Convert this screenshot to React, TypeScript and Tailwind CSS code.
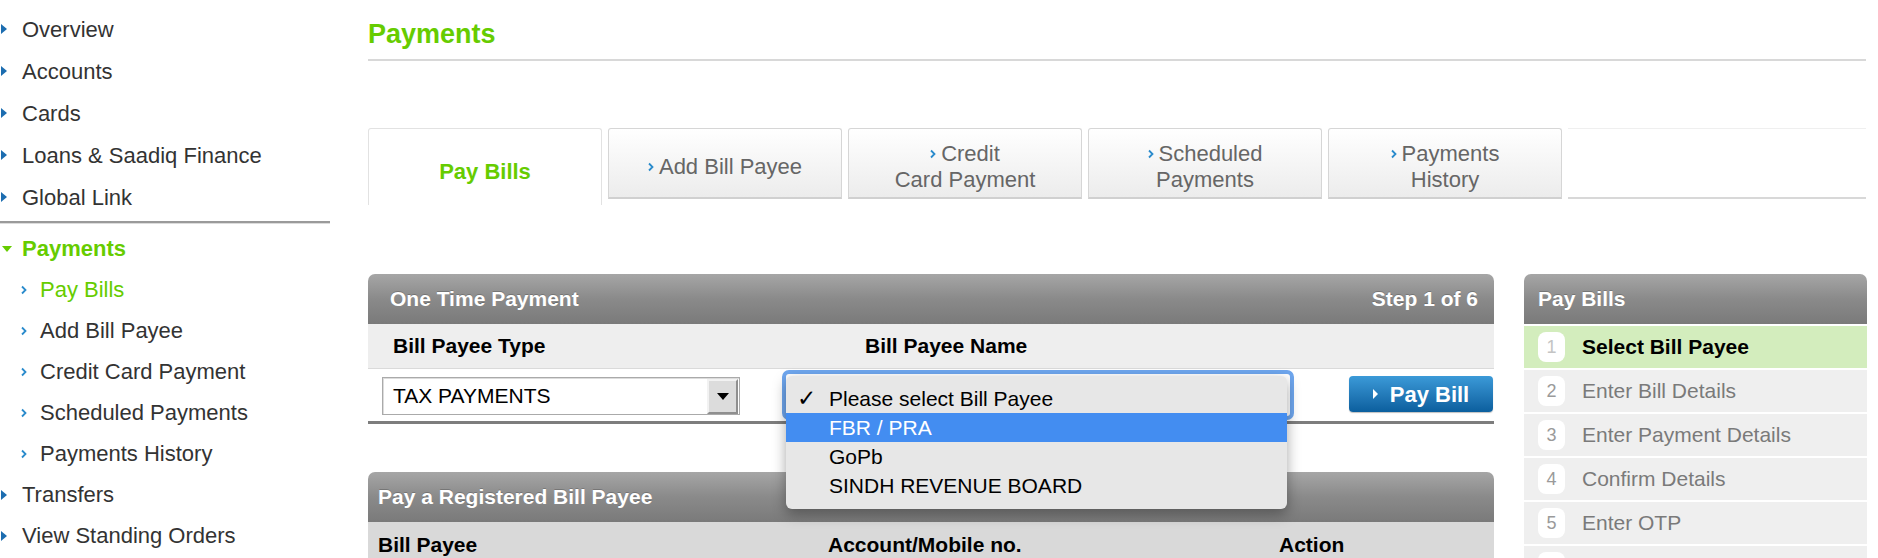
import React from 'react'

const font = "font-['Liberation_Sans','Helvetica',Arial,sans-serif]"

function Arrow() {
    return <span className="inline-block border-y-[5px] border-y-transparent border-l-[6px] border-l-[#1c6db0]" />
}

function Chevron({className = ""}: {className?: string}) {
    return (
        <svg width="6" height="10" viewBox="0 0 6 10" className={className}>
            <polyline points="1,1.5 4.5,5 1,8.5" fill="none" stroke="#2a8bcc" strokeWidth="1.8" />
        </svg>
    )
}

function SideItem({label}: {label: string}) {
    return (
        <div className="flex h-[42px] items-center text-[22px] text-[#333]">
            <span className="flex w-[22px] pl-px"><Arrow /></span>
            {label}
        </div>
    )
}

function SubItem({label, active}: {label: string; active?: boolean}) {
    return (
        <div className={"flex h-[41px] items-center text-[22px] " + (active ? "text-[#66cc00]" : "text-[#333]")}>
            <span className="flex w-[40px] pl-[21px]"><Chevron /></span>
            {label}
        </div>
    )
}

function Tab({lines, active}: {lines: string[]; active?: boolean}) {
    if (active) {
        return (
            <div className="flex h-[77px] w-[234px] items-start justify-center rounded-t-[3px] border-x border-t border-[#e2e2e2] bg-white pt-[26px] text-[22px] font-bold text-[#66cc00]">
                {lines[0]}
            </div>
        )
    }
    return (
        <div className="flex h-[71px] w-[234px] flex-col items-center justify-center rounded-t-[3px] border border-b-2 border-[#d6d6d6] border-b-[#d0d0d0] bg-gradient-to-b from-white to-[#ececec] pt-[8px] text-[22px] leading-[26px] text-[#666]">
            {lines.map((l, i) => (
                <div key={l} className="flex items-center">
                    {i === 0 && <Chevron className="mr-[5px]" />}
                    {l}
                </div>
            ))}
        </div>
    )
}

function PanelHeader({children, className = ""}: {children: React.ReactNode; className?: string}) {
    return (
        <div className={"flex h-[50px] items-center rounded-t-[7px] bg-gradient-to-b from-[#a6a6a6] via-[#8a8a8a] to-[#7a7a7a] text-[21px] font-bold text-white [text-shadow:0_-1px_0_rgba(0,0,0,0.2)] " + className}>
            {children}
        </div>
    )
}

const payeeOptions = ["FBR / PRA", "GoPb", "SINDH REVENUE BOARD"]

// last row only peeks in at the bottom edge, so it carries no label
const steps = ["Select Bill Payee", "Enter Bill Details", "Enter Payment Details", "Confirm Details", "Enter OTP", ""]

export default function App() {
    return (
        <div className={"flex h-[558px] w-[1878px] overflow-hidden bg-white " + font}>
            {/* Left navigation */}
            <aside className="w-[330px] shrink-0 pt-[8px]">
                <SideItem label="Overview" />
                <SideItem label="Accounts" />
                <SideItem label="Cards" />
                <SideItem label="Loans & Saadiq Finance" />
                <SideItem label="Global Link" />
                <div className="mt-[3px] h-[2px] bg-[#9a9a9a] shadow-[0_1px_0_#dcdcdc]" />
                <div className="mt-[5px] flex h-[41px] items-center text-[22px] font-bold text-[#66cc00]">
                    <span className="flex w-[22px] pl-[2px]">
                        <span className="inline-block border-x-[5px] border-x-transparent border-t-[6px] border-t-[#66cc00]" />
                    </span>
                    Payments
                </div>
                <SubItem label="Pay Bills" active />
                <SubItem label="Add Bill Payee" />
                <SubItem label="Credit Card Payment" />
                <SubItem label="Scheduled Payments" />
                <SubItem label="Payments History" />
                <div className="flex h-[41px] items-center text-[22px] text-[#333]">
                    <span className="flex w-[22px] pl-px"><Arrow /></span>
                    Transfers
                </div>
                <div className="flex h-[41px] items-center text-[22px] text-[#333]">
                    <span className="flex w-[22px] pl-px"><Arrow /></span>
                    View Standing Orders
                </div>
            </aside>

            <main className="ml-[38px] w-[1498px] shrink-0">
                <h1 className="mt-[21px] border-b-2 border-[#d8d8d8] pb-[11px] text-[27px] font-bold leading-[27px] text-[#66cc00]">
                    Payments
                </h1>

                {/* Tabs */}
                <div className="mt-[67px] flex h-[71px] items-start gap-[6px]">
                    <Tab lines={["Pay Bills"]} active />
                    <Tab lines={["Add Bill Payee"]} />
                    <Tab lines={["Credit", "Card Payment"]} />
                    <Tab lines={["Scheduled", "Payments"]} />
                    <Tab lines={["Payments", "History"]} />
                    <div className="h-[71px] flex-1 border-t border-b-2 border-[#efefef] border-b-[#d8d8d8]" />
                </div>

                <div className="mt-[75px] flex gap-[30px]">
                    <div className="w-[1126px] shrink-0">
                        {/* One time payment */}
                        <PanelHeader className="justify-between pl-[22px] pr-[16px]">
                            <span>One Time Payment</span>
                            <span>Step 1 of 6</span>
                        </PanelHeader>
                        <div className="flex h-[45px] items-center border-b border-[#dadada] bg-[#eeeeee] text-[21px] font-bold text-black">
                            <span className="w-[497px] pl-[25px]">Bill Payee Type</span>
                            <span>Bill Payee Name</span>
                        </div>
                        <div className="flex h-[55px] items-start border-b-[3px] border-[#7d7d7d]">
                            <div className="ml-[14px] mt-[8px] flex h-[38px] w-[358px] items-center border border-[#aaaaaa] bg-white shadow-[inset_1px_1px_0_#dcdcdc]">
                                <span className="flex-1 pl-[10px] text-[21px] text-black">TAX PAYMENTS</span>
                                <span className="mr-px flex h-[35px] w-[31px] items-center justify-center border-2 border-[#f2f2f2] border-b-[#8f8f8f] border-r-[#8f8f8f] bg-[#dcdcdc]">
                                    <span className="inline-block border-x-[6px] border-x-transparent border-t-[7px] border-t-black" />
                                </span>
                            </div>

                            <div className="relative ml-[42px] mt-px h-[50px] w-[512px] rounded-[7px] border-4 border-[#6ea6ee] bg-white">
                                {/* open option list */}
                                <div className="absolute left-0 top-[2px] z-10 w-[501px] rounded-[6px] bg-[#e7e7e7] pb-[9px] pt-[8px] text-[21px] text-black shadow-[0_5px_14px_rgba(0,0,0,0.35)]">
                                    <div className="flex h-[29px] items-center">
                                        <span className="w-[43px] pl-[11px] font-['DejaVu_Sans',sans-serif] text-[23px] leading-none">✓</span>
                                        Please select Bill Payee
                                    </div>
                                    {payeeOptions.map((o, i) => (
                                        <div key={o} className={"flex h-[29px] items-center pl-[43px] " + (i === 0 ? "bg-[#438df1] text-white" : "")}>
                                            {o}
                                        </div>
                                    ))}
                                </div>
                            </div>

                            <button className="ml-auto mr-px mt-[7px] flex h-[36px] w-[144px] items-center justify-center gap-[12px] rounded-[4px] bg-gradient-to-b from-[#3b9ad8] to-[#0b5f9e] text-[22px] font-bold text-white shadow-[0_1px_1px_rgba(0,0,0,0.25)]">
                                <span className="inline-block border-y-[5px] border-y-transparent border-l-[5px] border-l-white" />
                                Pay Bill
                            </button>
                        </div>

                        {/* Registered payees */}
                        <div className="mt-[48px]">
                            <PanelHeader className="pl-[10px]">Pay a Registered Bill Payee</PanelHeader>
                            <div className="flex h-[45px] items-center bg-[#d9d9d9] text-[21px] font-bold text-black">
                                <span className="w-[460px] pl-[10px]">Bill Payee</span>
                                <span className="w-[451px]">Account/Mobile no.</span>
                                <span>Action</span>
                            </div>
                        </div>
                    </div>

                    {/* Steps */}
                    <div className="w-[343px] shrink-0">
                        <PanelHeader className="pl-[14px]">Pay Bills</PanelHeader>
                        <div className="mt-[2px] flex flex-col gap-[2px]">
                            {steps.map((s, i) => (
                                <div key={i} className={"flex h-[42px] items-center " + (i === 0 ? "bg-[#d3edbd]" : "bg-[#efefef]")}>
                                    <span className={"ml-[14px] flex h-[30px] w-[27px] items-center justify-center rounded-[8px] bg-white text-[18px] " + (i === 0 ? "text-[#c4c4c4]" : "text-[#9a9a9a]")}>
                                        {s ? i + 1 : ""}
                                    </span>
                                    {s && <span className={"ml-[17px] text-[21px] " + (i === 0 ? "font-bold text-black" : "text-[#7a7a7a]")}>{s}</span>}
                                </div>
                            ))}
                        </div>
                    </div>
                </div>
            </main>
        </div>
    )
}
